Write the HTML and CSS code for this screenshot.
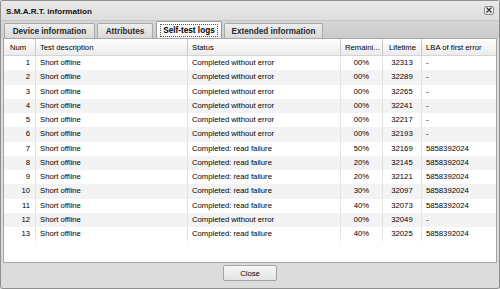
FILE: index.html
```html
<!DOCTYPE html>
<html>
<head>
<meta charset="utf-8">
<link rel="stylesheet" href="styles.css">
</head>
<body>
<div class="window">
  <div class="titlebar">
    <span class="title">S.M.A.R.T. information</span>
    <span class="xbtn"><svg width="6" height="6" viewBox="0 0 6 6"><path d="M0.5 0.5L5.5 5.5M5.5 0.5L0.5 5.5" stroke="#333" stroke-width="1.2"/></svg></span>
  </div>
  <div class="content">
    <div class="tabs">
      <div class="tab t1">Device information</div>
      <div class="tab t2">Attributes</div>
      <div class="tab t3 active"><span class="focus">Self-test logs</span></div>
      <div class="tab t4">Extended information</div>
    </div>
    <div class="panel">
      <table class="grid">
        <colgroup>
          <col class="c-num"><col class="c-desc"><col class="c-status"><col class="c-rem"><col class="c-life"><col class="c-lba">
        </colgroup>
        <thead>
          <tr><th class="l">Num</th><th>Test description</th><th>Status</th><th>Remaini...</th><th class="ctr">Lifetime</th><th class="last">LBA of first error</th></tr>
        </thead>
        <tbody>
          <tr><td class="r">1</td><td>Short offline</td><td>Completed without error</td><td class="ctr">00%</td><td class="ctr">32313</td><td class="last">-</td></tr>
          <tr><td class="r">2</td><td>Short offline</td><td>Completed without error</td><td class="ctr">00%</td><td class="ctr">32289</td><td class="last">-</td></tr>
          <tr><td class="r">3</td><td>Short offline</td><td>Completed without error</td><td class="ctr">00%</td><td class="ctr">32265</td><td class="last">-</td></tr>
          <tr><td class="r">4</td><td>Short offline</td><td>Completed without error</td><td class="ctr">00%</td><td class="ctr">32241</td><td class="last">-</td></tr>
          <tr><td class="r">5</td><td>Short offline</td><td>Completed without error</td><td class="ctr">00%</td><td class="ctr">32217</td><td class="last">-</td></tr>
          <tr><td class="r">6</td><td>Short offline</td><td>Completed without error</td><td class="ctr">00%</td><td class="ctr">32193</td><td class="last">-</td></tr>
          <tr><td class="r">7</td><td>Short offline</td><td>Completed: read failure</td><td class="ctr">50%</td><td class="ctr">32169</td><td class="last">5858392024</td></tr>
          <tr><td class="r">8</td><td>Short offline</td><td>Completed: read failure</td><td class="ctr">20%</td><td class="ctr">32145</td><td class="last">5858392024</td></tr>
          <tr><td class="r">9</td><td>Short offline</td><td>Completed: read failure</td><td class="ctr">20%</td><td class="ctr">32121</td><td class="last">5858392024</td></tr>
          <tr><td class="r">10</td><td>Short offline</td><td>Completed: read failure</td><td class="ctr">30%</td><td class="ctr">32097</td><td class="last">5858392024</td></tr>
          <tr><td class="r">11</td><td>Short offline</td><td>Completed: read failure</td><td class="ctr">40%</td><td class="ctr">32073</td><td class="last">5858392024</td></tr>
          <tr><td class="r">12</td><td>Short offline</td><td>Completed without error</td><td class="ctr">00%</td><td class="ctr">32049</td><td class="last">-</td></tr>
          <tr><td class="r">13</td><td>Short offline</td><td>Completed: read failure</td><td class="ctr">40%</td><td class="ctr">32025</td><td class="last">5858392024</td></tr>
        </tbody>
      </table>
    </div>
    <div class="footer">
      <button class="btn">Close</button>
    </div>
  </div>
</div>
</body>
</html>
```

FILE: styles.css
```css
html, body {
  margin: 0;
  padding: 0;
  background: #d6d6d6;
}
body {
  font-family: "Liberation Sans", Arial, sans-serif;
  font-size: 7.7px;
  color: #000;
}
.window {
  width: 500px;
  height: 289px;
  box-sizing: border-box;
  border: 1px solid #8f8f8f;
  border-radius: 3px;
  background: #dcdcdc;
  display: flex;
  flex-direction: column;
  overflow: hidden;
}
.titlebar {
  height: 19px;
  border-bottom: 1px solid #c6c6c6;
  background: linear-gradient(#e9e9e9, #dedede);
  display: flex;
  align-items: center;
  justify-content: space-between;
  padding: 0 5px 0 5px;
}
.title {
  font-weight: bold;
  font-size: 8.1px;
  color: #111;
  margin-top: 1px;
}
.xbtn {
  width: 8px;
  height: 7px;
  border: 1px solid #8c8c8c;
  border-radius: 2px;
  background: linear-gradient(#fafafa, #e2e2e2);
  display: flex;
  align-items: center;
  justify-content: center;
  margin-top: -1px;
}
.content {
  flex: 1;
  display: flex;
  flex-direction: column;
  padding: 0 2px 0 2px;
}
.tabs {
  height: 17px;
  display: flex;
  align-items: flex-end;
  gap: 2px;
  background: linear-gradient(#d6d6d6, #cbcbcb);
  margin: 0 -2px;
  padding: 0 2px 0 3px;
}
.tab {
  height: 15px;
  box-sizing: border-box;
  border: 1px solid #a9a9a9;
  border-bottom: none;
  border-radius: 2px 2px 0 0;
  background: linear-gradient(#eeeeee, #d9d9d9);
  font-weight: bold;
  font-size: 8.2px;
  color: #2a2a2a;
  display: flex;
  align-items: center;
  justify-content: center;
}
.t1 { width: 91px; }
.t2 { width: 56px; margin-right: 1px; }
.t3 { width: 66px; }
.t4 { width: 99px; }
.tab.active {
  height: 17px;
  background: linear-gradient(#ffffff, #f6f6f6);
  color: #000;
  border-color: #9c9c9c;
}
.focus {
  outline: 1px dotted #555;
  padding: 1px 2px;
  line-height: 9px;
}
.panel {
  height: 225px;
  box-sizing: border-box;
  border: 1px solid #aaa5a5;
  background: #ffffff;
  overflow: hidden;
}
.grid {
  width: 100%;
  table-layout: fixed;
  border-collapse: separate;
  border-spacing: 0;
}
.c-num { width: 32px; }
.c-desc { width: 152px; }
.c-status { width: 153px; }
.c-rem { width: 42px; }
.c-life { width: 39px; }
.c-lba { width: auto; }
th {
  height: 17px;
  box-sizing: border-box;
  font-weight: normal;
  text-align: left;
  color: #000;
  background: linear-gradient(#ffffff, #ebebeb);
  border-right: 1px solid #c9c9c9;
  border-bottom: 1px solid #d4d4d4;
  padding: 0 3px 0 4px;
  white-space: nowrap;
  overflow: hidden;
}
th.l { padding-left: 6px; }
th.last, td.last { border-right: none; }
td {
  height: 14.25px;
  box-sizing: border-box;
  padding: 0 4px 0 4px;
  border-right: 1px solid #e3e3e3;
  white-space: nowrap;
  overflow: hidden;
  line-height: 14px;
}
tbody tr:nth-child(even) td {
  background: #f3f3f3;
}
td.r { text-align: right; padding-right: 5px; }
.ctr { text-align: center; }
th.ctr { text-align: center; }
.footer {
  flex: 1;
  display: flex;
  justify-content: center;
  align-items: flex-start;
  padding-top: 2px;
}
.btn {
  width: 54px;
  height: 16px;
  box-sizing: border-box;
  border: 1px solid #a3a3a3;
  border-radius: 2px;
  background: linear-gradient(#f7f7f7, #e3e3e3);
  font-family: "Liberation Sans", Arial, sans-serif;
  font-size: 7.7px;
  color: #000;
  padding: 0;
}
```
